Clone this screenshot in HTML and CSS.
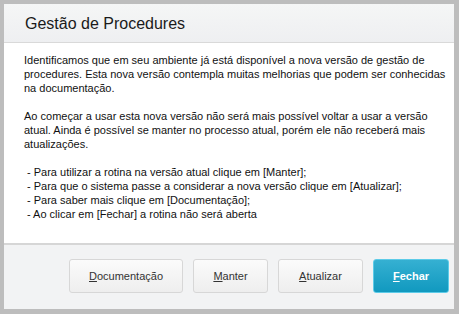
FILE: index.html
```html
<!DOCTYPE html>
<html lang="pt-BR">
<head>
    <meta charset="UTF-8">
    <title>Gestão de Procedures</title>
    <link rel="stylesheet" href="styles.css">
</head>
<body>
    <div class="dialog">
        <div class="dialog-header">Gestão de Procedures</div>
        <div class="dialog-body">
            <p>Identificamos que em seu ambiente já está disponível a nova versão de gestão de<br>procedures. Esta nova versão contempla muitas melhorias que podem ser conhecidas<br>na documentação.</p>
            <p>Ao começar a usar esta nova versão não será mais possível voltar a usar a versão<br>atual. Ainda é possível se manter no processo atual, porém ele não receberá mais<br>atualizações.</p>
            <ul class="steps">
                <li>- Para utilizar a rotina na versão atual clique em [Manter];</li>
                <li>- Para que o sistema passe a considerar a nova versão clique em [Atualizar];</li>
                <li>- Para saber mais clique em [Documentação];</li>
                <li>- Ao clicar em [Fechar] a rotina não será aberta</li>
            </ul>
        </div>
        <div class="dialog-footer">
            <button class="btn btn-doc"><u>D</u>ocumentação</button>
            <button class="btn btn-manter"><u>M</u>anter</button>
            <button class="btn btn-atualizar"><u>A</u>tualizar</button>
            <button class="btn btn-primary"><u>F</u>echar</button>
        </div>
    </div>
</body>
</html>
```
FILE: styles.css
```css
body {
    margin: 0;
    padding: 4px 5px 5px 4px;
    background-color: #bdbdbd;
    font-family: "Liberation Sans", Arial, sans-serif;
    color: #111;
}

.dialog {
    width: 450px;
    height: 305px;
    background-color: #fff;
    display: flex;
    flex-direction: column;
}

.dialog-header {
    height: 38px;
    line-height: 40px;
    padding-left: 21px;
    font-size: 16px;
    color: #1a1a1a;
    background: linear-gradient(#f5f6f6, #eeeff1);
    border-bottom: 1px solid #d9d9d9;
}

.dialog-body {
    flex: 1;
    padding: 10px 4px 0 20px;
    font-size: 11px;
    line-height: 14px;
    white-space: nowrap;
}

.dialog-body p {
    margin: 0 0 14px 0;
}

.steps {
    list-style: none;
    margin: 0;
    padding-left: 3px;
}

.dialog-footer {
    height: 66px;
    border-top: 2px solid #d6d6d6;
    background-color: #f2f3f4;
    display: flex;
    justify-content: flex-end;
    align-items: flex-start;
    padding: 14px 5px 0 0;
    box-sizing: border-box;
    gap: 10px;
}

.btn {
    height: 34px;
    font-family: "Liberation Sans", Arial, sans-serif;
    font-size: 11px;
    color: #333;
    background: linear-gradient(#fbfbfb, #eeeeee);
    border: 1px solid #d7d7d7;
    border-radius: 3px;
    cursor: pointer;
}

.btn-doc {
    width: 114px;
}

.btn-manter {
    width: 75px;
}

.btn-atualizar {
    width: 85px;
}

.btn-primary {
    width: 76px;
    color: #fff;
    font-weight: bold;
    background: linear-gradient(#35b0d2, #1199bf);
    border: 1px solid #5ccbe8;
}
```
